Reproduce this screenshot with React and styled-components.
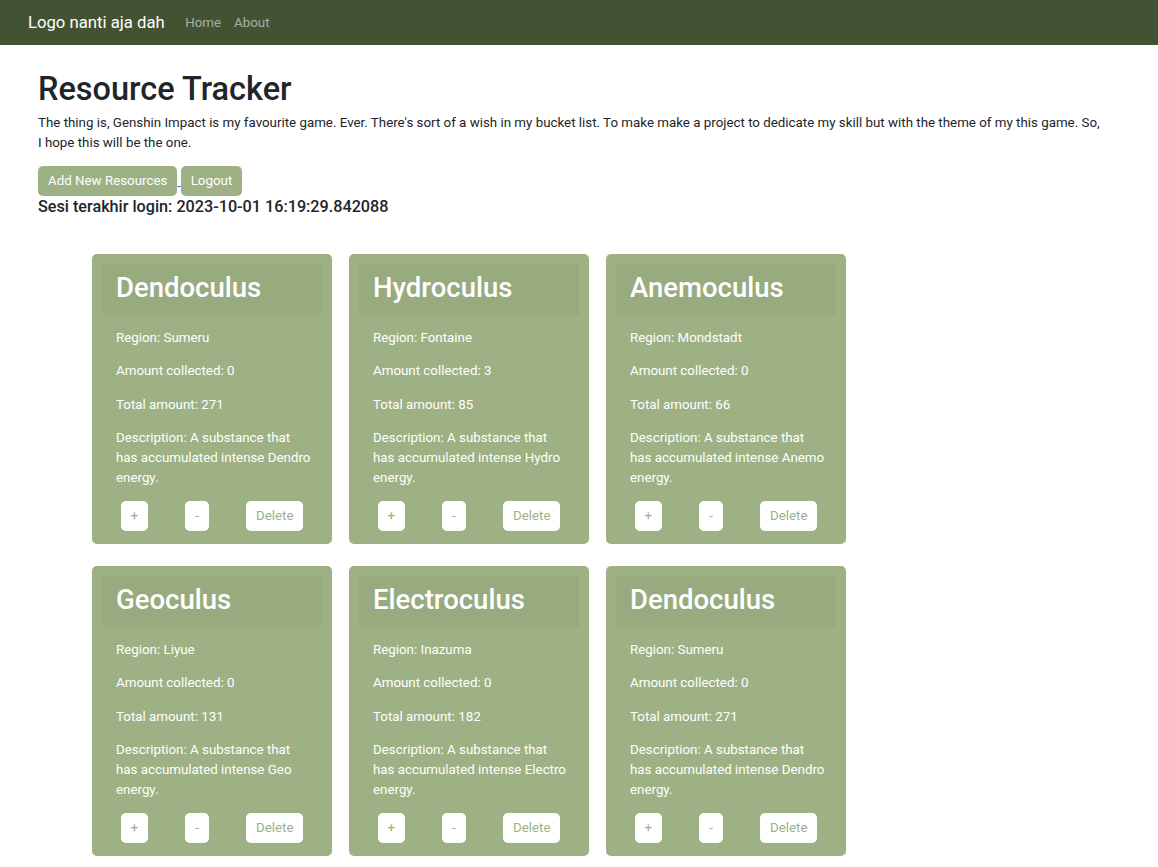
import React from "react";
import styled, { createGlobalStyle } from "styled-components";

const GlobalStyle = createGlobalStyle`
    body {
        margin: 0;
        font-family: Roboto, "Liberation Sans", sans-serif;
        font-size: 13.33px;
        line-height: 1.5;
        color: #212529;
        background: #fff;
    }
    * {
        box-sizing: border-box;
    }
`;

const Navbar = styled.nav`
    display: flex;
    align-items: center;
    height: 45px;
    padding: 0 28px;
    background: #445234;
`;

const Brand = styled.a`
    font-size: 16.7px;
    color: #fff;
    text-decoration: none;
    margin-right: 14px;
`;

const NavLink = styled.a`
    color: rgba(255, 255, 255, 0.55);
    text-decoration: none;
    padding: 0 6.5px;
`;

const Container = styled.main`
    padding: 24px 38px 0;
`;

const Title = styled.h1`
    font-size: 32.5px;
    font-weight: 500;
    line-height: 40px;
    margin: 0 0 4px;
`;

const Intro = styled.p`
    margin: 0 0 13px;
    max-width: 1064px;
`;

const ActionLink = styled.a`
    color: #0d6efd;
    text-decoration: underline;
`;

const Button = styled.button`
    font-family: inherit;
    font-size: 13.33px;
    line-height: 20px;
    padding: 5px 10px;
    border: 0;
    border-radius: 5px;
    background: #9db184;
    color: #fff;
    cursor: pointer;
`;

const Session = styled.h5`
    font-size: 16.2px;
    font-weight: 500;
    line-height: 20px;
    margin: 1px 0 37px;
`;

const Grid = styled.div`
    display: grid;
    grid-template-columns: repeat(3, 240px);
    column-gap: 17px;
    row-gap: 22px;
    padding-left: 54px;
    padding-bottom: 20px;
`;

const Card = styled.div`
    background: #9db184;
    border-radius: 5px;
    padding: 10px 10px 13px;
    color: #fff;
`;

const CardHeader = styled.div`
    background: rgba(0, 0, 0, 0.03);
    padding: 6px 14px 10px;
`;

const CardTitle = styled.h3`
    font-size: 27.5px;
    font-weight: 500;
    line-height: 35px;
    margin: 0;
`;

const CardBody = styled.div`
    padding: 13px 9px 0 14px;
`;

const Line = styled.p`
    margin: 0 0 13.3px;
    line-height: 20px;
`;

const CardActions = styled.div`
    display: flex;
    justify-content: space-around;
`;

const SmallButton = styled.button`
    font-family: inherit;
    font-size: 13.33px;
    line-height: 20px;
    padding: 5px 10px;
    border: 0;
    border-radius: 5px;
    background: #fff;
    color: #9db184;
    cursor: pointer;
`;

const resources = [
    { name: "Dendoculus", region: "Sumeru", collected: 0, total: 271, element: "Dendro" },
    { name: "Hydroculus", region: "Fontaine", collected: 3, total: 85, element: "Hydro" },
    { name: "Anemoculus", region: "Mondstadt", collected: 0, total: 66, element: "Anemo" },
    { name: "Geoculus", region: "Liyue", collected: 0, total: 131, element: "Geo" },
    { name: "Electroculus", region: "Inazuma", collected: 0, total: 182, element: "Electro" },
    { name: "Dendoculus", region: "Sumeru", collected: 0, total: 271, element: "Dendro" },
];

const ResourceCard = ({ item }) => {
    return (
        <Card>
            <CardHeader>
                <CardTitle>{item.name}</CardTitle>
            </CardHeader>
            <CardBody>
                <Line>Region: {item.region}</Line>
                <Line>Amount collected: {item.collected}</Line>
                <Line>Total amount: {item.total}</Line>
                <Line>
                    Description: A substance that has accumulated intense {item.element} energy.
                </Line>
            </CardBody>
            <CardActions>
                <SmallButton>+</SmallButton>
                <SmallButton>-</SmallButton>
                <SmallButton>Delete</SmallButton>
            </CardActions>
        </Card>
    );
};

const App = () => {
    return (
        <>
            <GlobalStyle />
            <Navbar>
                <Brand href="#">Logo nanti aja dah</Brand>
                <NavLink href="#">Home</NavLink>
                <NavLink href="#">About</NavLink>
            </Navbar>
            <Container>
                <Title>Resource Tracker</Title>
                <Intro>
                    The thing is, Genshin Impact is my favourite game. Ever. There's sort of a wish in my bucket
                    list. To make make a project to dedicate my skill but with the theme of my this game. So, I hope
                    this will be the one.
                </Intro>
                <div>
                    <ActionLink href="#">
                        <Button>Add New Resources</Button>{" "}
                    </ActionLink>
                    <ActionLink href="#">
                        <Button>Logout</Button>
                    </ActionLink>
                </div>
                <Session>Sesi terakhir login: 2023-10-01 16:19:29.842088</Session>
                <Grid>
                    {resources.map((item, i) => (
                        <ResourceCard key={i} item={item} />
                    ))}
                </Grid>
            </Container>
        </>
    );
};

export default App;
